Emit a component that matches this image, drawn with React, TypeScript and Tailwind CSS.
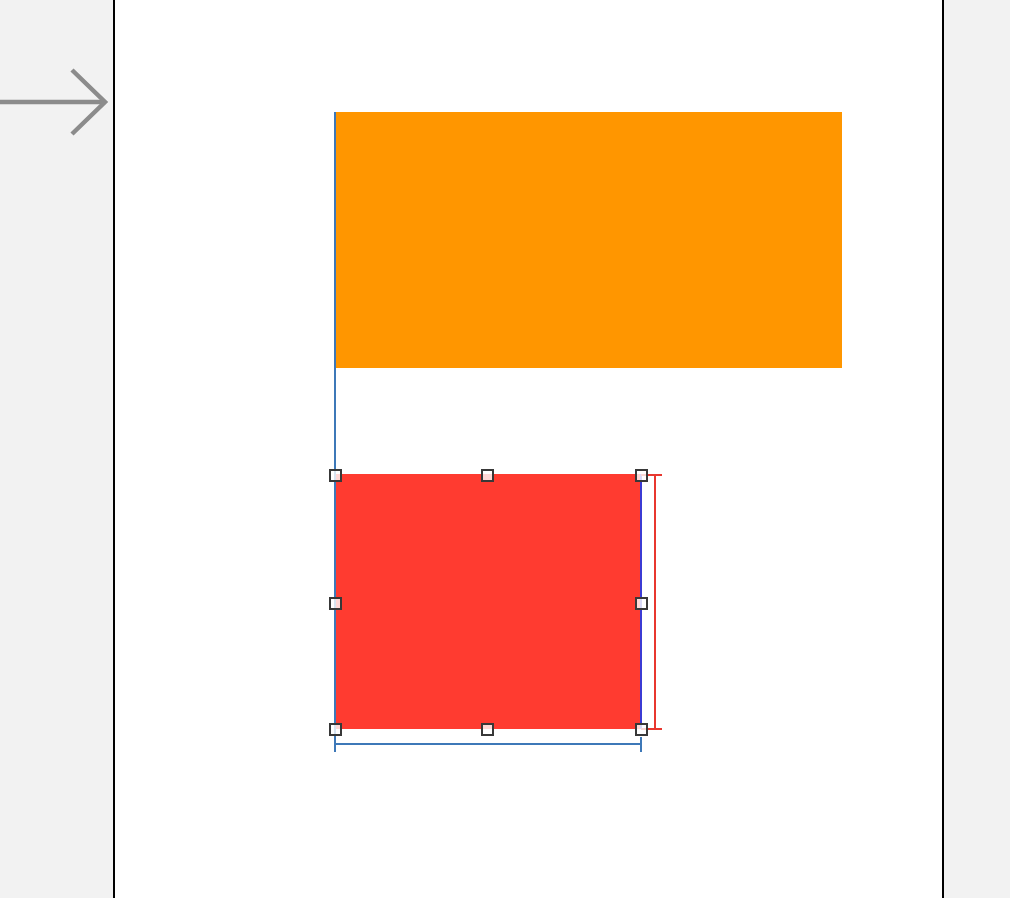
import React from "react";

function Handle({ x, y }: { x: number; y: number }) {
  return (
    <div
      className="absolute w-[13px] h-[13px] border-2 border-[#383838] bg-white/80"
      style={{ left: x - 115 - 6.5, top: y - 6.5 }}
    />
  );
}

export default function App() {
  const xs = [335, 487, 641];
  const ys = [475, 603, 729];
  const handles: { x: number; y: number }[] = [];
  for (const y of ys) for (const x of xs) if (!(x === 487 && y === 603)) handles.push({ x, y });
  return (
    <div className="flex w-[1010px] h-[898px] overflow-hidden bg-[#f2f2f2]">
      <div className="w-[113px] shrink-0 pt-[68px]">
        <svg width="113" height="70" viewBox="0 0 113 70">
          <path d="M0 34 H105" stroke="#8c8c8c" strokeWidth="4.5" fill="none" />
          <path d="M72 2 L105 34 L72 66" stroke="#8c8c8c" strokeWidth="4.5" fill="none" />
        </svg>
      </div>
      <div className="relative w-[831px] shrink-0 h-full bg-white border-x-2 border-black">
        <div className="flex flex-col gap-[106px] pl-[220px] pt-[112px]">
          <div className="w-[507px] h-[256px] bg-[#ff9600]" />
          <div className="w-[306px] h-[255px] bg-[#ff3b30]" />
        </div>
        {/* left alignment guide */}
        <div className="absolute left-[219px] top-[112px] w-[2px] h-[640px] bg-[#3d78b8]" />
        {/* right edge selection line */}
        <div className="absolute left-[525px] top-[474px] w-[2px] h-[255px] bg-[#3b3bd4]" />
        {/* height constraint */}
        <div className="absolute left-[539px] top-[474px] w-[2px] h-[256px] bg-[#e8372f]" />
        <div className="absolute left-[526px] top-[474px] w-[21px] h-[2px] bg-[#e8372f]" />
        <div className="absolute left-[526px] top-[728px] w-[21px] h-[2px] bg-[#e8372f]" />
        {/* width constraint */}
        <div className="absolute left-[220px] top-[743px] w-[306px] h-[2px] bg-[#3d78b8]" />
        <div className="absolute left-[525px] top-[737px] w-[2px] h-[15px] bg-[#3d78b8]" />
        {handles.map((h, i) => (
          <Handle key={i} x={h.x} y={h.y} />
        ))}
      </div>
      <div className="flex-1" />
    </div>
  );
}
